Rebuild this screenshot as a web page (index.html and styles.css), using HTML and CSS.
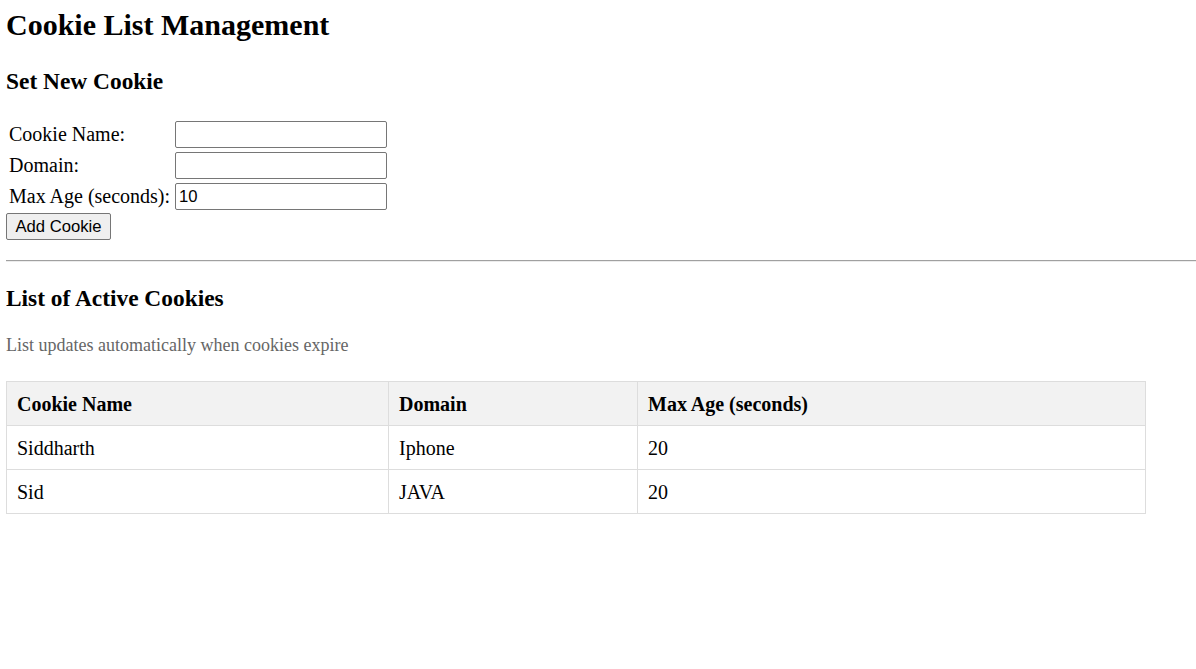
FILE: index.html
```html
<!DOCTYPE html>
<html lang="en">
<head>
<meta charset="utf-8">
<title>Cookie List Management</title>
<link rel="stylesheet" href="styles.css">
</head>
<body>
<h1 class="title">Cookie List Management</h1>

<h3 class="section-title">Set New Cookie</h3>
<form class="cookie-form">
  <table class="form-table">
    <tr>
      <td class="label">Cookie Name:</td>
      <td><input class="field" type="text"></td>
    </tr>
    <tr>
      <td class="label">Domain:</td>
      <td><input class="field" type="text"></td>
    </tr>
    <tr>
      <td class="label">Max Age (seconds):</td>
      <td><input class="field" type="text" value="10"></td>
    </tr>
  </table>
  <button class="add-btn" type="button">Add Cookie</button>
</form>

<hr class="divider">

<h3 class="section-title list-title">List of Active Cookies</h3>
<p class="note">List updates automatically when cookies expire</p>

<table class="cookie-table">
  <colgroup>
    <col class="col-name">
    <col class="col-domain">
    <col class="col-age">
  </colgroup>
  <thead>
    <tr>
      <th>Cookie Name</th>
      <th>Domain</th>
      <th>Max Age (seconds)</th>
    </tr>
  </thead>
  <tbody>
    <tr>
      <td>Siddharth</td>
      <td>Iphone</td>
      <td>20</td>
    </tr>
    <tr>
      <td>Sid</td>
      <td>JAVA</td>
      <td>20</td>
    </tr>
  </tbody>
</table>
</body>
</html>
```

FILE: styles.css
```css
html, body {
  background: #ffffff;
}

body {
  margin: 8px 0 0 6px;
  font-family: "Liberation Serif", "Times New Roman", serif;
  font-size: 20px;
  color: #000000;
}

.title {
  font-size: 30px;
  font-weight: bold;
  margin: 0 0 26px 0;
}

.section-title {
  font-size: 23.4px;
  font-weight: bold;
  margin: 23.4px 0;
}

.list-title {
  margin-top: 22.4px;
}

.cookie-form {
  margin: 0 0 20px 0;
}

.form-table {
  border-spacing: 2px;
  border-collapse: separate;
  font-size: 20px;
}

.form-table td {
  padding: 1px;
  vertical-align: middle;
}

.form-table .label {
  padding-right: 2px;
}

.field {
  box-sizing: border-box;
  width: 212px;
  height: 27px;
  margin: 0;
  padding: 1px 3px;
  border: 1px solid #767676;
  border-radius: 2px;
  font-family: "Liberation Sans", Arial, sans-serif;
  font-size: 16.67px;
  color: #000000;
  background: #ffffff;
}

.add-btn {
  box-sizing: border-box;
  width: 105px;
  height: 27px;
  margin: 0;
  padding: 0 6px;
  display: block;
  border: 1px solid #767676;
  border-radius: 2px;
  background: #efefef;
  font-family: "Liberation Sans", Arial, sans-serif;
  font-size: 16.67px;
  color: #000000;
}

.divider {
  margin: 0;
  height: 0;
  border: none;
  border-top: 1px solid #a0a0a0;
  border-bottom: 1px solid #ececec;
}

.note {
  font-size: 18px;
  color: #666666;
  margin: 0 0 25px 0;
}

.cookie-table {
  width: 1139px;
  table-layout: fixed;
  border-collapse: collapse;
  border: 1px solid #dddddd;
  font-size: 20px;
}

.col-name { width: 382px; }
.col-domain { width: 249px; }
.col-age { width: 508px; }

.cookie-table th,
.cookie-table td {
  border: 1px solid #dddddd;
  padding: 11px 10px 9px 10px;
  text-align: left;
  height: 23px;
  line-height: 23px;
}

.cookie-table th {
  background: #f2f2f2;
  font-weight: bold;
}
```
